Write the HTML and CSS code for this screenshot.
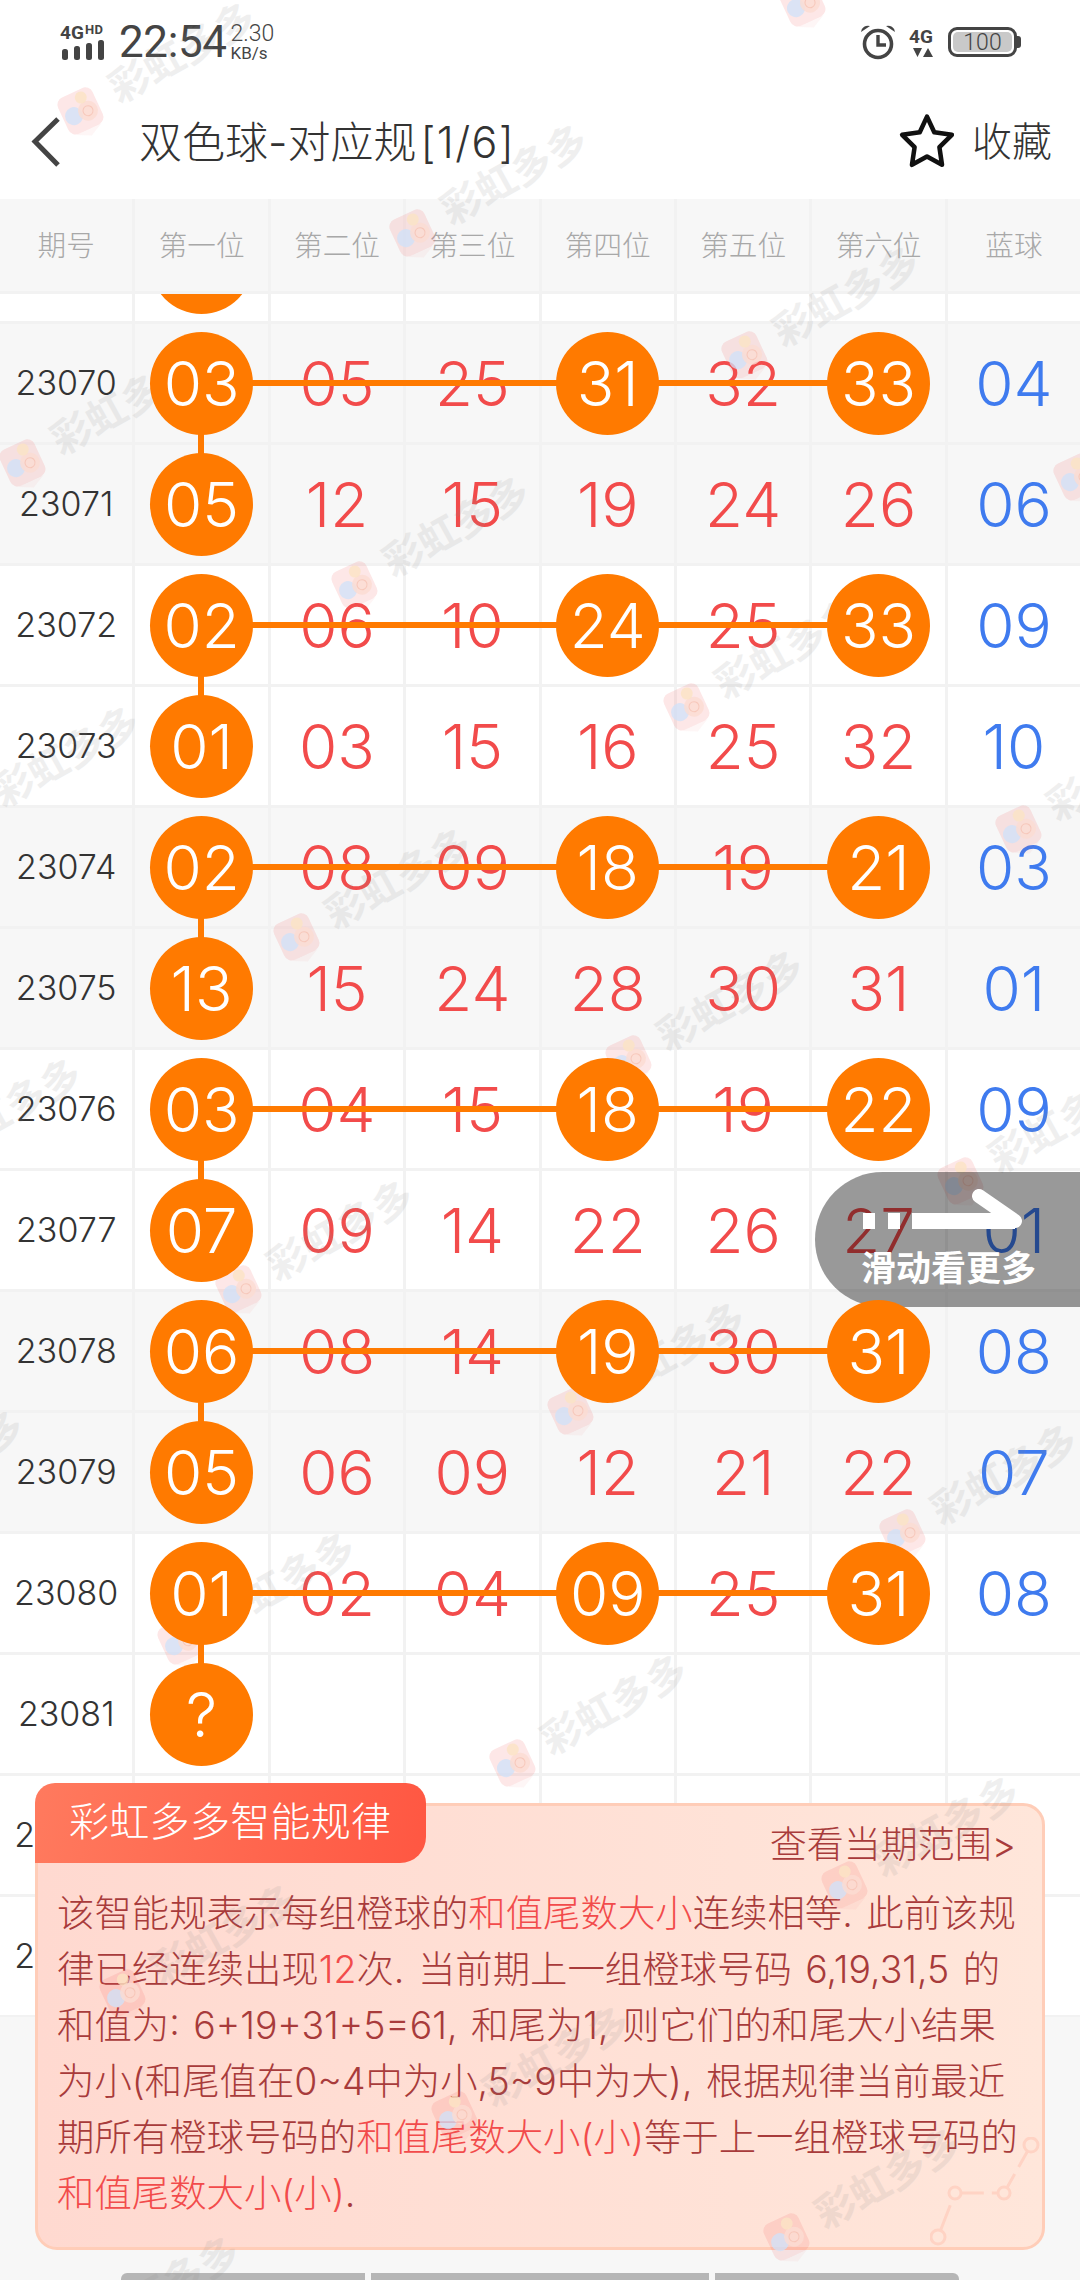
FILE: index.html
```html
<!DOCTYPE html>
<html lang="zh-CN">
<head>
<meta charset="utf-8">
<title>双色球-对应规</title>
<link rel="stylesheet" href="styles.css">
</head>
<body>
<div class="screen">
  <div class="status">
    <div class="status-left">
      <svg class="sig" width="48" height="38" viewBox="0 0 48 38"><text class="sig-4g" x="0" y="16">4G</text><text class="sig-hd" x="25" y="11">HD</text><rect x="2" y="26" width="6" height="11" rx="2.5"/><rect x="14" y="23" width="6" height="14" rx="2.5"/><rect x="26" y="20" width="6" height="17" rx="2.5"/><rect x="38" y="17" width="6" height="20" rx="2.5"/></svg>
      <span class="time">22:54</span>
      <span class="speed"><span class="speed-n">2.30</span><span class="speed-u">KB/s</span></span>
    </div>
    <div class="status-right">
      <svg width="36" height="36" viewBox="0 0 36 36"><circle cx="18" cy="20" r="13.5" fill="none" stroke="#444" stroke-width="3.6"/><path d="M18 11v10h8" fill="none" stroke="#444" stroke-width="3.4"/><path d="M1 8a7 7 0 0 1 9-6zM35 8a7 7 0 0 0-9-6z" fill="#444"/></svg>
      <svg width="26" height="32" viewBox="0 0 26 32"><text class="net-4g" x="0" y="17">4G</text><path d="M4 22h9l-4.500 9zM14 31h10l-5-9z" fill="#444"/></svg>
      <div class="battery"><span class="battery-fill">100</span></div>
    </div>
  </div>

  <div class="nav">
    <svg class="back" width="34" height="52" viewBox="0 0 34 52"><path d="M28 3 5 25.500 28 49" fill="none" stroke="#444" stroke-width="5"/></svg>
    <h1 class="title">双色球-对应规<span class="title-page">[1/6]</span></h1>
    <svg class="star" width="58" height="56" viewBox="0 0 56 54"><path d="M28 3.500 35 18.500 52 21 40 33 42.500 50 28 42 13.500 50 16 33 4 21 21 18.500Z" fill="none" stroke="#111" stroke-width="4.400" stroke-linejoin="round"/></svg>
    <span class="fav">收藏</span>
  </div>

  <div class="row head">
    <div class="cell">期号</div><div class="cell">第一位</div><div class="cell">第二位</div><div class="cell">第三位</div><div class="cell">第四位</div><div class="cell">第五位</div><div class="cell">第六位</div><div class="cell">蓝球</div>
  </div>

  <div class="list">
    <div class="row scrolled"><div class="cell"></div><div class="cell"><b class="ball"></b></div><div class="cell"></div><div class="cell"></div><div class="cell"></div><div class="cell"></div><div class="cell"></div><div class="cell"></div></div>

    <div class="row grey linked"><div class="cell no">23070</div><div class="cell"><b class="ball">03</b></div><div class="cell red">05</div><div class="cell red">25</div><div class="cell"><b class="ball">31</b></div><div class="cell red">32</div><div class="cell"><b class="ball">33</b></div><div class="cell blue">04</div></div>
    <div class="row grey"><div class="cell no">23071</div><div class="cell"><b class="ball">05</b></div><div class="cell red">12</div><div class="cell red">15</div><div class="cell red">19</div><div class="cell red">24</div><div class="cell red">26</div><div class="cell blue">06</div></div>
    <div class="row linked"><div class="cell no">23072</div><div class="cell"><b class="ball">02</b></div><div class="cell red">06</div><div class="cell red">10</div><div class="cell"><b class="ball">24</b></div><div class="cell red">25</div><div class="cell"><b class="ball">33</b></div><div class="cell blue">09</div></div>
    <div class="row"><div class="cell no">23073</div><div class="cell"><b class="ball">01</b></div><div class="cell red">03</div><div class="cell red">15</div><div class="cell red">16</div><div class="cell red">25</div><div class="cell red">32</div><div class="cell blue">10</div></div>
    <div class="row grey linked"><div class="cell no">23074</div><div class="cell"><b class="ball">02</b></div><div class="cell red">08</div><div class="cell red">09</div><div class="cell"><b class="ball">18</b></div><div class="cell red">19</div><div class="cell"><b class="ball">21</b></div><div class="cell blue">03</div></div>
    <div class="row grey"><div class="cell no">23075</div><div class="cell"><b class="ball">13</b></div><div class="cell red">15</div><div class="cell red">24</div><div class="cell red">28</div><div class="cell red">30</div><div class="cell red">31</div><div class="cell blue">01</div></div>
    <div class="row linked"><div class="cell no">23076</div><div class="cell"><b class="ball">03</b></div><div class="cell red">04</div><div class="cell red">15</div><div class="cell"><b class="ball">18</b></div><div class="cell red">19</div><div class="cell"><b class="ball">22</b></div><div class="cell blue">09</div></div>
    <div class="row"><div class="cell no">23077</div><div class="cell"><b class="ball">07</b></div><div class="cell red">09</div><div class="cell red">14</div><div class="cell red">22</div><div class="cell red">26</div><div class="cell red">27</div><div class="cell blue">01</div></div>
    <div class="row grey linked"><div class="cell no">23078</div><div class="cell"><b class="ball">06</b></div><div class="cell red">08</div><div class="cell red">14</div><div class="cell"><b class="ball">19</b></div><div class="cell red">30</div><div class="cell"><b class="ball">31</b></div><div class="cell blue">08</div></div>
    <div class="row grey"><div class="cell no">23079</div><div class="cell"><b class="ball">05</b></div><div class="cell red">06</div><div class="cell red">09</div><div class="cell red">12</div><div class="cell red">21</div><div class="cell red">22</div><div class="cell blue">07</div></div>
    <div class="row linked"><div class="cell no">23080</div><div class="cell"><b class="ball">01</b></div><div class="cell red">02</div><div class="cell red">04</div><div class="cell"><b class="ball">09</b></div><div class="cell red">25</div><div class="cell"><b class="ball">31</b></div><div class="cell blue">08</div></div>
    <div class="row"><div class="cell no">23081</div><div class="cell"><b class="ball">?</b></div><div class="cell"></div><div class="cell"></div><div class="cell"></div><div class="cell"></div><div class="cell"></div><div class="cell"></div></div>
    <div class="row"><div class="cell no">23082</div><div class="cell"></div><div class="cell"></div><div class="cell"></div><div class="cell"></div><div class="cell"></div><div class="cell"></div><div class="cell"></div></div>
    <div class="row"><div class="cell no">23083</div><div class="cell"></div><div class="cell"></div><div class="cell"></div><div class="cell"></div><div class="cell"></div><div class="cell"></div><div class="cell"></div></div>
  </div>

  <div class="footer">
    <span class="foot-btn foot-a"></span><span class="foot-btn foot-b"></span><span class="foot-btn foot-c"></span>
  </div>

  <section class="card">
    <h2 class="card-tab">彩虹多多智能规律</h2>
    <a class="card-link">查看当期范围&gt;</a>
    <p class="card-text">该智能规表示每组橙球的<em>和值尾数大小</em>连续相等. 此前该规<br>律已经连续出现<em>12</em>次. 当前期上一组橙球号码 6,19,31,5 的<br>和值为: 6+19+31+5=61, 和尾为1, 则它们的和尾大小结果<br>为小(和尾值在0~4中为小,5~9中为大), 根据规律当前最近<br>期所有橙球号码的<em>和值尾数大小(小)</em>等于上一组橙球号码的<br><em>和值尾数大小(小)</em>.</p>
    <svg class="card-deco" width="110" height="110" viewBox="0 0 110 110"><path d="M8 100 25 56H74L101 8" fill="none" stroke="#ffd3c4" stroke-width="3" stroke-dasharray="34 8"/><g fill="#ffe6da" stroke="#ffd3c4" stroke-width="3"><circle cx="8" cy="100" r="7"/><circle cx="25" cy="56" r="6"/><circle cx="74" cy="56" r="6"/><circle cx="101" cy="8" r="7"/></g></svg>
  </section>

  <svg class="watermarks" width="1080" height="2280" viewBox="0 0 1080 2280">
    <defs>
      <g id="wm">
        <g transform="rotate(-25)">
          <rect x="-19" y="-19" width="38" height="40" rx="8" fill="#f25f5f" opacity=".15"/>
          <path d="M-14 21h28l-14 7z" fill="#f25f5f" opacity=".06"/>
          <circle cx="-8" cy="3" r="9" fill="#cfe2fa" opacity=".75"/>
          <circle cx="7" cy="4" r="10" fill="#fbdcd2" opacity=".8"/>
          <circle cx="7" cy="4" r="5" fill="none" stroke="#f3b9a8" stroke-width="1" opacity=".6"/>
          <circle cx="6" cy="-11" r="6" fill="#fbe3c4" opacity=".8"/>
        </g>
        <text class="wm-text" transform="translate(39 -6) rotate(-29)">彩虹多多</text>
      </g>
    </defs>
    <use href="#wm" x="138" y="-242"/><use href="#wm" x="470" y="-120"/><use href="#wm" x="802" y="2"/>
    <use href="#wm" x="80" y="110"/><use href="#wm" x="412" y="232"/><use href="#wm" x="744" y="354"/><use href="#wm" x="1076" y="476"/>
    <use href="#wm" x="22" y="462"/><use href="#wm" x="354" y="584"/><use href="#wm" x="686" y="706"/><use href="#wm" x="1018" y="828"/>
    <use href="#wm" x="-36" y="814"/><use href="#wm" x="296" y="936"/><use href="#wm" x="628" y="1058"/><use href="#wm" x="960" y="1180"/>
    <use href="#wm" x="-94" y="1166"/><use href="#wm" x="238" y="1288"/><use href="#wm" x="570" y="1410"/><use href="#wm" x="902" y="1532"/>
    <use href="#wm" x="-152" y="1518"/><use href="#wm" x="180" y="1640"/><use href="#wm" x="512" y="1762"/><use href="#wm" x="844" y="1884"/>
    <use href="#wm" x="122" y="1992"/><use href="#wm" x="454" y="2114"/><use href="#wm" x="786" y="2236"/>
    <use href="#wm" x="64" y="2344"/>
  </svg>

  <div class="more">
    <svg class="more-arrow" width="176" height="60" viewBox="0 0 176 60"><path d="M8 33H20M33 33H45M57 33H160" fill="none" stroke="#fff" stroke-width="16" stroke-linecap="butt"/><path d="M124 8 160 33" fill="none" stroke="#fff" stroke-width="14" stroke-linecap="round"/></svg>
    <span class="more-text">滑动看更多</span>
  </div>
</div>
</body>
</html>
```

FILE: styles.css
```css
* { box-sizing: border-box; margin: 0; padding: 0; }
html, body { background: #f7f7f7; }
body { width: 1080px; height: 2280px; overflow: hidden; font-family: Inter, "Noto Sans CJK SC", sans-serif; font-weight: 300; }
.screen { position: relative; width: 1080px; height: 2280px; overflow: hidden; background: #f7f7f7; }

.status { display: flex; justify-content: space-between; align-items: center; height: 84px; padding: 0 63px 0 60px; background: #fff; color: #444; }
.status-left { display: flex; align-items: center; gap: 11px; }
.sig { fill: #444; overflow: visible; }
.sig-4g { font: 700 19px Roboto, sans-serif; }
.sig-hd { font: 700 13px Roboto, sans-serif; letter-spacing: .3px; }
.time { font-family: Roboto, sans-serif; font-size: 44px; font-weight: 400; line-height: 1; letter-spacing: -.4px; }
.speed { display: flex; flex-direction: column; font-family: Roboto, sans-serif; line-height: 1; margin-left: -7px; }
.speed-n { font-size: 23px; }
.speed-u { font-size: 17px; font-weight: 400; }
.status-right { display: flex; align-items: center; gap: 13px; }
.status-right svg { overflow: visible; }
.net-4g { font: 700 19px Roboto, sans-serif; fill: #444; }
.battery { position: relative; width: 69px; height: 30px; border: 3px solid #444; border-radius: 9px; padding: 2px; }
.battery::after { content: ""; position: absolute; right: -7px; top: 6px; width: 4px; height: 12px; background: #444; border-radius: 0 3px 3px 0; }
.battery-fill { display: block; height: 20px; line-height: 21px; background: #c9c9c9; border-radius: 5px; text-align: center; font-family: Roboto, sans-serif; font-size: 23px; color: #444; }

.nav { display: flex; align-items: center; height: 115px; padding-left: 30px; background: #fff; position: relative; }
.back { flex: none; }
.title { font-size: 43px; font-weight: 300; color: #333; margin-left: 75px; flex: 1; white-space: nowrap; padding-bottom: 6px; }
.title-page { margin-left: 4px; letter-spacing: 1.4px; }
.star { flex: none; margin-right: 16px; margin-bottom: 2px; }
.fav { font-size: 40px; color: #333; margin-right: 28px; padding-bottom: 6px; }

.row { position: relative; display: grid; grid-template-columns: repeat(8, 135.4px); height: 121px; background: #fff; }
.grey { background: #f7f7f7; }
.cell { display: flex; align-items: center; justify-content: center; border-right: 3px solid #f2f2f2; border-bottom: 3px solid #f2f2f2; font-size: 62px; line-height: 1; }
.head { height: 95px; background: #f7f7f7; }
.head .cell { font-size: 28.6px; color: #a8a8a8; padding-top: 2px; }
.list { height: 1723px; overflow: hidden; }
.scrolled { margin-top: -91px; }
.no { font-size: 34px; font-weight: 300; color: #333; }
.red { color: #f24b4b; padding-top: 2px; }
.blue { color: #3f7bef; padding-top: 2px; }
.ball { position: relative; z-index: 2; display: flex; align-items: center; justify-content: center; width: 103px; height: 103px; padding-top: 2px; border-radius: 50%; background: #ff7a00; color: #fff; font-weight: 300; flex: none; }
.linked::before { content: ""; position: absolute; z-index: 1; left: 201px; top: 56px; width: 677px; height: 6px; background: #ff7a00; }
.linked::after { content: ""; position: absolute; z-index: 1; left: 198px; top: 100px; width: 6px; height: 40px; background: #ff7a00; }

.footer { position: absolute; left: 0; right: 0; top: 2273px; height: 7px; display: flex; gap: 6px; padding-left: 121px; }
.foot-btn { display: block; height: 20px; background: #b6b6b6; border-radius: 6px 0 0 0; }
.foot-a { width: 244px; }
.foot-b { width: 338px; border-radius: 0; }
.foot-c { width: 244px; border-radius: 0 6px 0 0; }

.card { position: absolute; left: 35px; top: 1803px; width: 1010px; height: 447px; border: 3px solid #ffcdb8; border-radius: 22px; background: linear-gradient(90deg, #ffd9d0, #ffe6da); color: #a83b3b; }
.card-tab { position: absolute; left: -3px; top: -23px; width: 391px; height: 80px; padding-left: 34px; line-height: 78px; font-size: 40px; font-weight: 300; color: #fff; letter-spacing: .3px; background: linear-gradient(100deg, #ff7a5e, #ff5742); border-radius: 20px 20px 26px 0; z-index: 1; }
.card-link { position: absolute; right: 26px; top: 14px; font-size: 37px; line-height: 50px; }
.card-text { position: absolute; left: 19px; top: 80px; font-size: 37.4px; line-height: 56px; white-space: nowrap; word-spacing: 3px; }
.card-text em { font-style: normal; color: #f24b4b; }
.card-deco { position: absolute; right: 2px; bottom: 0; }

.watermarks { position: absolute; left: 0; top: 0; pointer-events: none; }
.wm-text { font-size: 40px; font-weight: 700; fill: #8a8a8a; opacity: .13; font-family: "Noto Sans CJK SC", sans-serif; }

.more { position: absolute; right: 0; top: 1172px; width: 265px; height: 135px; border-radius: 68px 0 0 68px; background: rgba(0, 0, 0, .4); }
.more-arrow { position: absolute; left: 40px; top: 16px; }
.more-text { position: absolute; left: 46px; top: 76px; font-size: 35px; line-height: 40px; font-weight: 700; color: #fff; white-space: nowrap; }
```
